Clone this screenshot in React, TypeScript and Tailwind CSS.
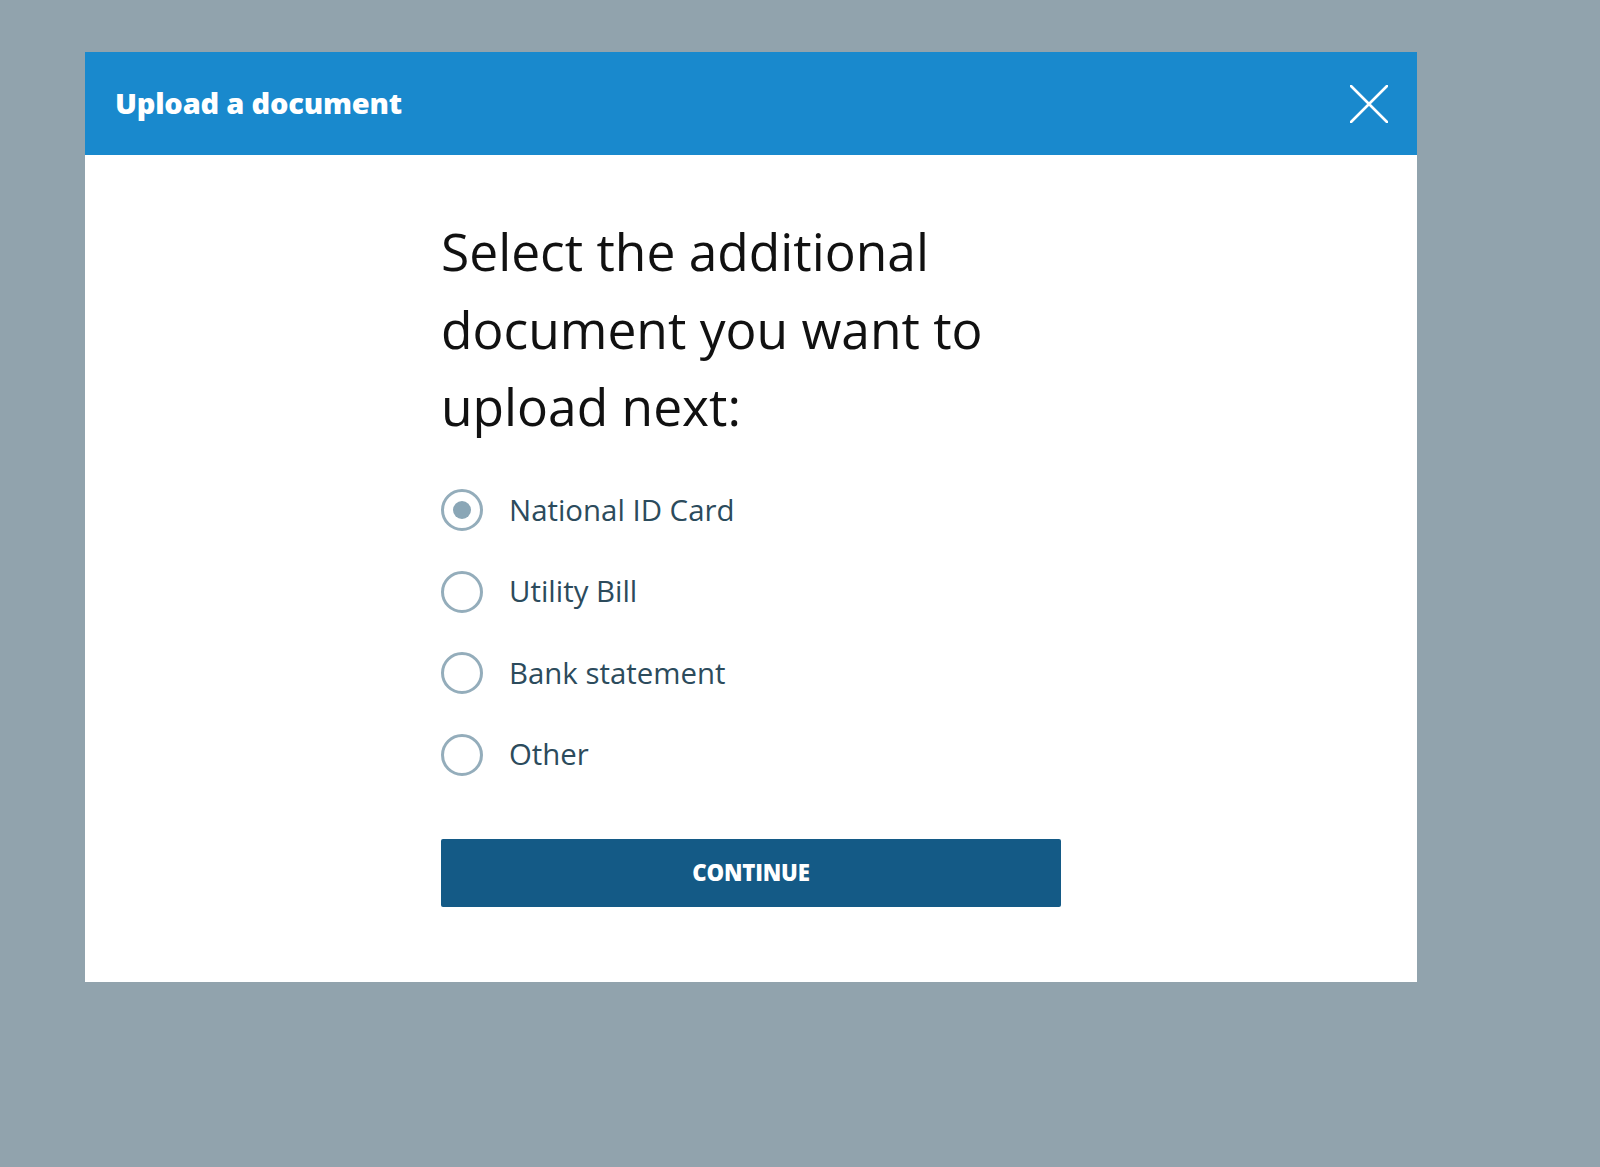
import React, { useState } from 'react';

const options = ['National ID Card', 'Utility Bill', 'Bank statement', 'Other'];

const RadioRow: React.FC<{ label: string; checked: boolean; onSelect: () => void }> = ({ label, checked, onSelect }) => {
  return (
    <label className="flex items-center h-[81.5px] cursor-pointer" onClick={onSelect}>
      <span className="w-[42px] h-[42px] rounded-full border-[3px] border-[#94adbb] flex items-center justify-center shrink-0">
        {checked && <span className="w-[18px] h-[18px] rounded-full bg-[#8aa6b6]" />}
      </span>
      <span className="ml-[26px] text-[29.4px] text-[#2c4b5c] leading-none">{label}</span>
    </label>
  );
};

export default function App() {
  const [selected, setSelected] = useState(0);

  return (
    <div className="min-h-[1167px] w-full bg-[#91a3ad] pl-[85px] pt-[52px] font-['Open_Sans',_'Liberation_Sans',_sans-serif]">
      <div className="w-[1332px] h-[930px] bg-white flex flex-col">
        <div className="h-[103px] bg-[#1989cd] flex items-center justify-between pl-[30px] pr-[29px]">
          <h2 className="text-white font-extrabold text-[29px] tracking-[-0.2px] -mt-[2px]">Upload a document</h2>
          <button className="w-[38px] h-[38px]" aria-label="Close">
            <svg viewBox="0 0 38 38" className="w-[38px] h-[38px]">
              <path d="M1 1 L37 37 M37 1 L1 37" stroke="white" strokeWidth="2.6" strokeLinecap="round" fill="none" />
            </svg>
          </button>
        </div>

        <div className="flex-1 flex justify-center pt-[58px]">
          <div className="w-[620px]">
            <h1 className="text-[51.5px] leading-[77.5px] text-[#111] font-normal">
              Select the additional document you want to upload next:
            </h1>
            <div className="mt-[24px]">
              {options.map((o, i) => (
                <RadioRow key={o} label={o} checked={selected === i} onSelect={() => setSelected(i)} />
              ))}
            </div>
            <button className="mt-[43px] w-[620px] h-[68px] bg-[#145a86] rounded-[2px] text-white font-extrabold text-[22.2px] tracking-[-0.2px]">
              CONTINUE
            </button>
          </div>
        </div>
      </div>
    </div>
  );
}
